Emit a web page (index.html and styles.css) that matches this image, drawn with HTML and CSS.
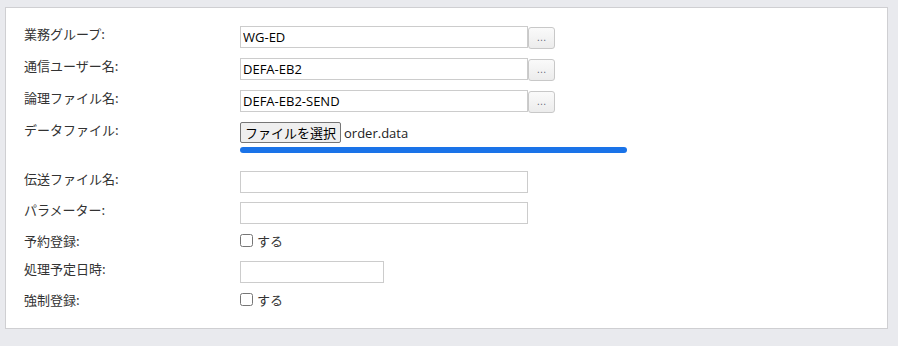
FILE: index.html
```html
<!DOCTYPE html>
<html lang="ja">
<head>
  <meta charset="UTF-8" />
  <title>データ送信登録</title>
  <link rel="stylesheet" href="styles.css">
</head>
<body>

<div class="panel">
  <!-- 宛先 -->
  <div class="row">
    <label class="row-label">業務グループ:</label>
    <div class="row-field">
      <input class="text-input" type="text" value="WG-ED">
      <button class="pick-btn" type="button">…</button>
    </div>
  </div>
  <div class="row">
    <label class="row-label">通信ユーザー名:</label>
    <div class="row-field">
      <input class="text-input" type="text" value="DEFA-EB2">
      <button class="pick-btn" type="button">…</button>
    </div>
  </div>
  <div class="row">
    <label class="row-label">論理ファイル名:</label>
    <div class="row-field">
      <input class="text-input" type="text" value="DEFA-EB2-SEND">
      <button class="pick-btn" type="button">…</button>
    </div>
  </div>

  <!-- アップロード -->
  <div class="row row-file">
    <label class="row-label">データファイル:</label>
    <div class="file-box">
      <div class="file-line">
        <button class="file-btn" type="button">ファイルを選択</button>
        <span class="file-name">order.data</span>
      </div>
      <div class="upload-bar"></div>
    </div>
  </div>

  <div class="row">
    <label class="row-label">伝送ファイル名:</label>
    <input class="text-input" type="text">
  </div>
  <div class="row">
    <label class="row-label">パラメーター:</label>
    <input class="text-input" type="text">
  </div>
  <div class="row row-check">
    <label class="row-label">予約登録:</label>
    <label class="check"><input type="checkbox"> する</label>
  </div>
  <div class="row">
    <label class="row-label">処理予定日時:</label>
    <input class="text-input date-input" type="text">
  </div>
  <div class="row row-check">
    <label class="row-label">強制登録:</label>
    <label class="check"><input type="checkbox"> する</label>
  </div>
</div>

</body>
</html>
```

FILE: styles.css
```css
body {
  margin: 0;
  background: #e9eaee;
  font-family: "Open Sans", "Noto Sans CJK JP", sans-serif;
  font-size: 13px;
  color: #333;
}

.panel {
  margin: 7px 10px 0 5px;
  padding: 18px 18px 17px;
  background: #fff;
  border: 1px solid #cfcfd2;
}

.row {
  display: flex;
  align-items: flex-start;
  margin-bottom: 9px;
}

.row:last-child {
  margin-bottom: 0;
}

.row-label {
  width: 216px;
  flex-shrink: 0;
  margin-top: -1px;
  line-height: 18px;
  font-family: "Noto Sans CJK JP", sans-serif;
  color: #333;
}

.row-field {
  display: flex;
  align-items: flex-start;
}

.text-input {
  box-sizing: border-box;
  width: 288px;
  height: 22px;
  margin: 0;
  padding: 0 2px;
  border: 1px solid #ccc;
  border-radius: 0;
  font-family: "Open Sans", "Noto Sans CJK JP", sans-serif;
  font-size: 13px;
  color: #000;
  outline: none;
}

.date-input {
  width: 144px;
}

.pick-btn {
  box-sizing: border-box;
  width: 27px;
  height: 22px;
  margin: 1px 0 0 0;
  padding: 0;
  border: 1px solid #c8c8c8;
  border-radius: 3px;
  background: linear-gradient(#fafafa, #ececec);
  color: #667;
  font-size: 10px;
  line-height: 18px;
  cursor: pointer;
}

/* file picker */
.file-box {
  width: 387px;
}

.file-line {
  display: flex;
  align-items: center;
  height: 21px;
}

.file-btn {
  box-sizing: border-box;
  height: 21px;
  margin: 0 3px 0 0;
  padding: 0 4px;
  border: 1px solid #767676;
  border-radius: 2px;
  background: #efefef;
  color: #000;
  font-family: "Noto Sans CJK JP", sans-serif;
  font-size: 13px;
  line-height: 18px;
}

.file-name {
  color: #222;
}

.upload-bar {
  height: 6px;
  margin: 4px 0 9px;
  border-radius: 3px;
  background: #1a73e8;
}

.row-check {
  height: 19px;
}

.check {
  display: flex;
  align-items: flex-start;
  gap: 4px;
  line-height: 16px;
  font-family: "Noto Sans CJK JP", sans-serif;
  color: #333;
}

.check input {
  width: 13px;
  height: 13px;
  margin: 1px 0 0;
}
```
